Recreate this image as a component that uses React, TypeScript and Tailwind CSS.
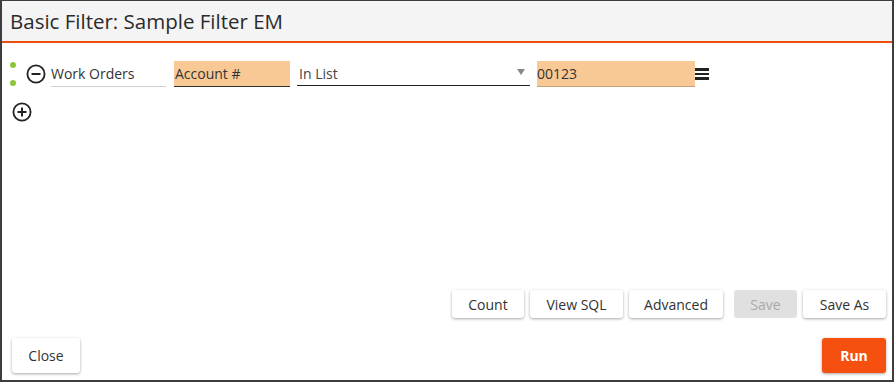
import React from "react";

function MinusCircle({ className }: { className?: string }) {
  return (
    <svg viewBox="0 0 20 20" className={className} fill="none" stroke="#222" strokeWidth="1.8">
      <circle cx="10" cy="10" r="8.6" />
      <line x1="5.5" y1="10" x2="14.5" y2="10" strokeWidth="2" />
    </svg>
  );
}

function PlusCircle({ className }: { className?: string }) {
  return (
    <svg viewBox="0 0 20 20" className={className} fill="none" stroke="#222" strokeWidth="1.8">
      <circle cx="10" cy="10" r="8.6" />
      <line x1="5.5" y1="10" x2="14.5" y2="10" strokeWidth="2" />
      <line x1="10" y1="5.5" x2="10" y2="14.5" strokeWidth="2" />
    </svg>
  );
}

const btn =
  "h-[28px] rounded-[3px] bg-white text-[14px] text-[#333] shadow-[0_1px_3px_rgba(0,0,0,0.35)]";

export default function App() {
  return (
    <div
      className="flex h-[382px] w-[894px] flex-col border-2 border-t border-[#3d3d3d] bg-white"
      style={{ fontFamily: '"Open Sans", "Noto Sans", sans-serif' }}
    >
      <div className="flex h-[42px] shrink-0 items-center border-b-2 border-[#f04e0f] bg-[#f4f4f4] pl-[8px]">
        <span className="text-[20.5px] leading-none text-[#2b2b2b]">Basic Filter: Sample Filter EM</span>
      </div>

      <div className="flex flex-1 flex-col">
        <div className="mt-[18px] flex h-[26px] items-center">
          <div className="ml-[8px] flex h-[26px] flex-col justify-between py-[1px]">
            <span className="h-[6px] w-[6px] rounded-full bg-[#8cc63e]" />
            <span className="h-[6px] w-[6px] rounded-full bg-[#8cc63e]" />
          </div>
          <MinusCircle className="ml-[10px] h-[20px] w-[20px]" />
          <div className="ml-[5px] flex h-[26px] w-[115px] items-center border-b border-[#cfcfcf] text-[14px] text-[#333]">
            Work Orders
          </div>
          <div className="ml-[8px] flex h-[26px] w-[116px] items-center border-b border-[#333] bg-[#f8c994] pl-[1px] text-[14px] text-[#333]">
            Account #
          </div>
          <div className="ml-[7px] flex h-[25px] w-[233px] items-center justify-between self-start border-b border-[#222] pl-[2px] pr-[5px] text-[14px] text-[#444]">
            <span>In List</span>
            <span className="mb-[2px] h-0 w-0 border-x-[4px] border-t-[6px] border-x-transparent border-t-[#888]" />
          </div>
          <div className="ml-[7px] flex h-[26px] w-[158px] items-center border-b border-[#c0a07d] bg-[#f8c994] text-[14px] text-[#333]">
            00123
          </div>
          <div className="flex w-[14px] flex-col gap-[2px]">
            <span className="h-[3px] w-[14px] bg-[#222]" />
            <span className="h-[2px] w-[14px] bg-[#222]" />
            <span className="h-[3px] w-[14px] bg-[#222]" />
          </div>
        </div>

        <div className="mt-[15px] ml-[10px]">
          <PlusCircle className="h-[20px] w-[20px]" />
        </div>

        <div className="mt-auto flex justify-end gap-[6px] pr-[6px]">
          <button className={`${btn} w-[72px]`}>Count</button>
          <button className={`${btn} w-[93px]`}>View SQL</button>
          <button className={`${btn} mr-[5px] w-[94px]`}>Advanced</button>
          <button className="h-[28px] w-[63px] rounded-[3px] bg-[#e0e0e0] text-[14px] text-[#aaa]">Save</button>
          <button className={`${btn} w-[83px]`}>Save As</button>
        </div>

        <div className="mt-[20px] mb-[7px] flex items-center justify-between pl-[10px] pr-[6px]">
          <button className={`${btn} h-[35px] w-[68px]`}>Close</button>
          <button className="h-[35px] w-[64px] rounded-[3px] bg-[#f5500f] text-[14px] font-bold text-white shadow-[0_1px_3px_rgba(0,0,0,0.35)]">
            Run
          </button>
        </div>
      </div>
    </div>
  );
}
